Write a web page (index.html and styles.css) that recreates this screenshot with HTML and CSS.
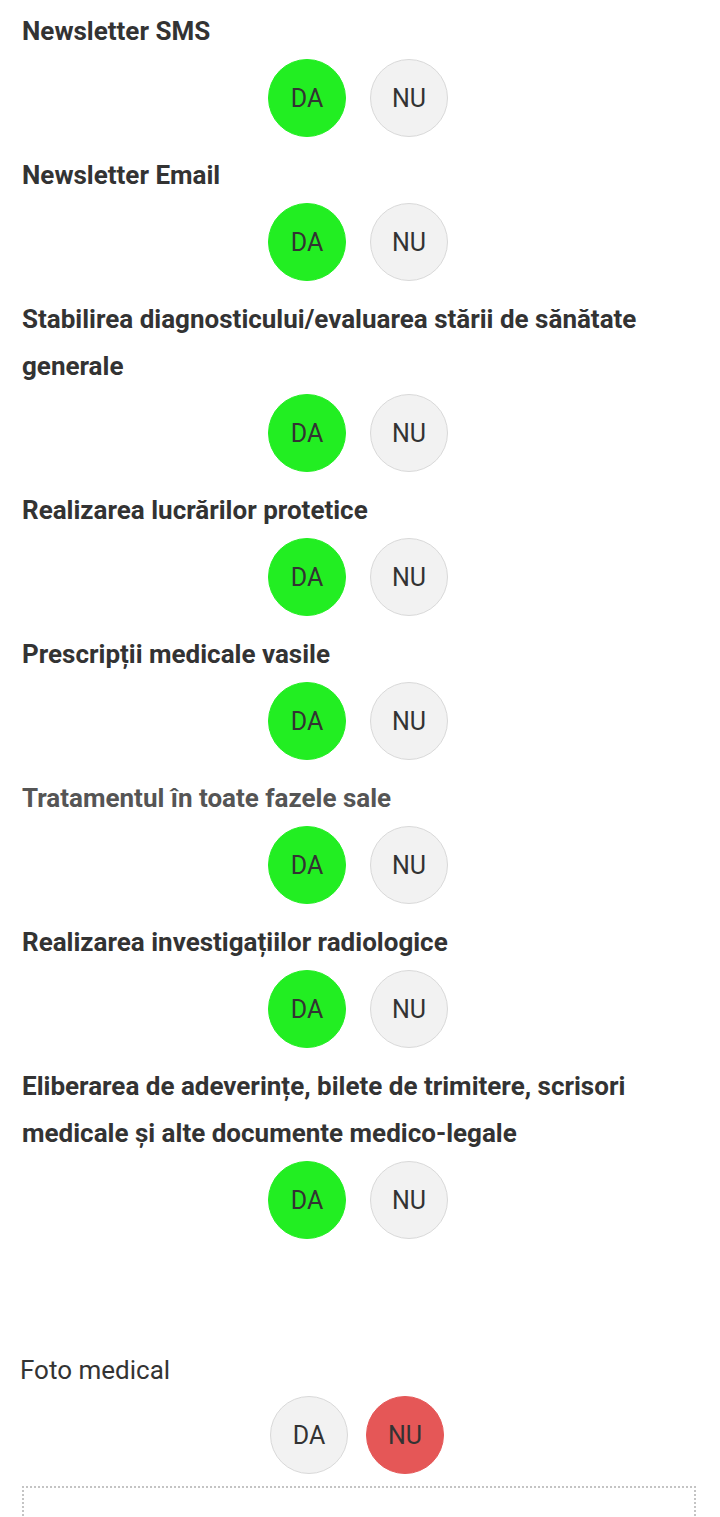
FILE: index.html
```html
<!DOCTYPE html>
<html lang="ro">

<head>
    <meta charset="UTF-8">
    <meta name="viewport" content="width=device-width, initial-scale=1.0">
    <title>Acorduri pacient</title>
    <link rel="stylesheet" href="styles.css">
</head>

<body>
    <div class="container">
        <!-- Acorduri -->
        <div class="option">
            <div class="option-label">Newsletter SMS</div>
            <div class="choice">
                <span class="btn btn-yes">DA</span>
                <span class="btn">NU</span>
            </div>
        </div>

        <div class="option">
            <div class="option-label">Newsletter Email</div>
            <div class="choice">
                <span class="btn btn-yes">DA</span>
                <span class="btn">NU</span>
            </div>
        </div>

        <div class="option">
            <div class="option-label">Stabilirea diagnosticului/evaluarea stării de sănătate generale</div>
            <div class="choice">
                <span class="btn btn-yes">DA</span>
                <span class="btn">NU</span>
            </div>
        </div>

        <div class="option">
            <div class="option-label">Realizarea lucrărilor protetice</div>
            <div class="choice">
                <span class="btn btn-yes">DA</span>
                <span class="btn">NU</span>
            </div>
        </div>

        <div class="option">
            <div class="option-label">Prescripții medicale vasile</div>
            <div class="choice">
                <span class="btn btn-yes">DA</span>
                <span class="btn">NU</span>
            </div>
        </div>

        <div class="option">
            <div class="option-label muted">Tratamentul în toate fazele sale</div>
            <div class="choice">
                <span class="btn btn-yes">DA</span>
                <span class="btn">NU</span>
            </div>
        </div>

        <div class="option">
            <div class="option-label">Realizarea investigațiilor radiologice</div>
            <div class="choice">
                <span class="btn btn-yes">DA</span>
                <span class="btn">NU</span>
            </div>
        </div>

        <div class="option">
            <div class="option-label">Eliberarea de adeverințe, bilete de trimitere, scrisori medicale și alte documente medico-legale</div>
            <div class="choice">
                <span class="btn btn-yes">DA</span>
                <span class="btn">NU</span>
            </div>
        </div>

        <!-- Foto medical -->
        <div class="photo-section">
            <div class="photo-label">Foto medical</div>
            <div class="choice choice-small">
                <span class="btn">DA</span>
                <span class="btn btn-no">NU</span>
            </div>
            <div class="upload-box"></div>
        </div>
    </div>
</body>

</html>
```

FILE: styles.css
```css
body {
    font-family: Roboto, "Noto Sans", Arial, sans-serif;
    margin: 0;
    padding: 0;
    background-color: #fff;
    color: #333;
}

.container {
    padding: 8px 26px 0 22px;
}

.option {
    margin-bottom: 15px;
}

.option-label {
    font-size: 26px;
    font-weight: bold;
    line-height: 47px;
    color: #333;
}

.option-label.muted {
    color: #555;
}

.choice {
    display: flex;
    justify-content: center;
    gap: 24px;
    margin-top: 4px;
}

.btn {
    width: 78px;
    height: 78px;
    border-radius: 50%;
    box-sizing: border-box;
    border: 1px solid #d9d9d9;
    background-color: #f2f2f2;
    display: flex;
    align-items: center;
    justify-content: center;
    font-size: 25px;
    color: #333;
}

.btn-yes {
    background-color: #22ee22;
    border-color: #22ee22;
}

.btn-no {
    background-color: #e55757;
    border-color: #e55757;
}

.photo-section {
    margin-top: 116px;
    margin-left: -2px;
}

.photo-label {
    font-size: 26px;
    line-height: 30px;
    color: #333;
}

.choice-small {
    margin-top: 11px;
    gap: 18px;
}

.upload-box {
    margin-top: 12px;
    margin-left: 2px;
    margin-right: -2px;
    height: 80px;
    border: 2px dotted #c4c4c4;
    border-bottom: none;
}
```
